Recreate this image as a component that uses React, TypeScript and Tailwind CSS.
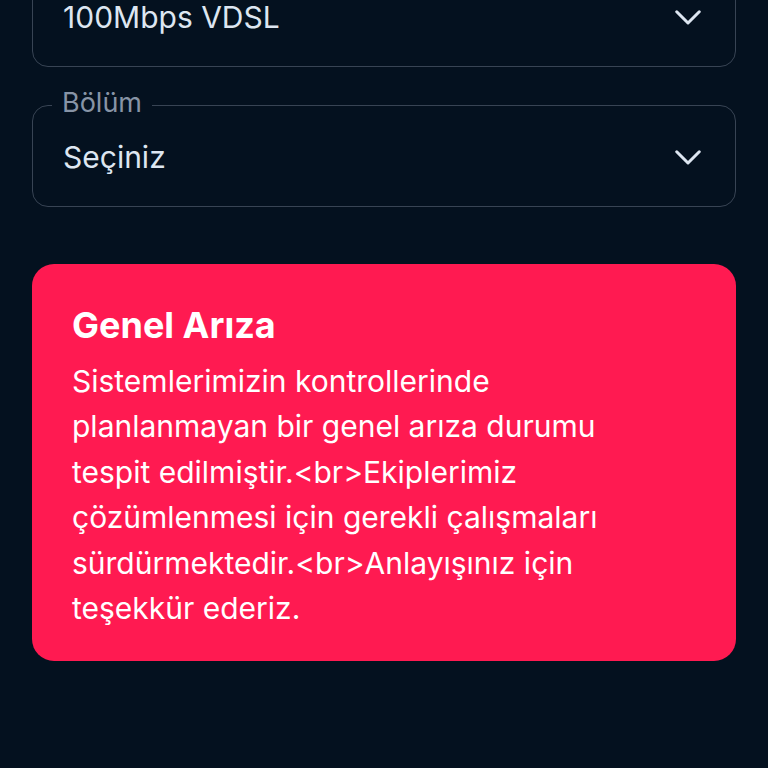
interface SelectFieldProps { label: string; value: string; }

function Chevron() {
  return (
    <svg width="26" height="15" viewBox="0 0 26 15" fill="none" className="text-[#dde6f1]">
      <polyline points="1.75,1.75 13,13 24.25,1.75" stroke="currentColor" strokeWidth="3" strokeLinecap="round" strokeLinejoin="round" />
    </svg>
  );
}

function SelectField({ label, value }: SelectFieldProps) {
  return (
    <fieldset className="h-[117px] rounded-[16px] border-[1.5px] border-[#384454] px-[19px]">
      <legend className="relative -top-[2px] px-[10px] text-[27px] leading-[30px] text-[#8794a6]">{label}</legend>
      <div className="flex h-[75px] items-center justify-between pl-[11px] pr-[15px]">
        <span className="text-[30px] text-[#dde6f1]">{value}</span>
        <Chevron />
      </div>
    </fieldset>
  );
}

export default function App() {
  return (
    <div className="min-h-[768px] overflow-hidden bg-[#04111f] px-8 font-['Inter',sans-serif]">
      <div className="-mt-[50px] flex flex-col gap-[23px]">
        <SelectField label="Paket" value="100Mbps VDSL" />
        <SelectField label="Bölüm" value="Seçiniz" />
      </div>

      <div className="mt-[57px] rounded-[22px] bg-[#ff1a51] pt-[39px] pr-[100px] pb-[30px] pl-10 text-white">
        <h2 className="text-[36px] font-bold leading-[44px]">Genel Arıza</h2>
        <p className="mt-[12px] text-[30px] leading-[45.4px]">
          Sistemlerimizin kontrollerinde planlanmayan bir genel arıza durumu tespit edilmiştir.&lt;br&gt;Ekiplerimiz çözümlenmesi için gerekli çalışmaları sürdürmektedir.&lt;br&gt;Anlayışınız için teşekkür ederiz.
        </p>
      </div>
    </div>
  );
}
